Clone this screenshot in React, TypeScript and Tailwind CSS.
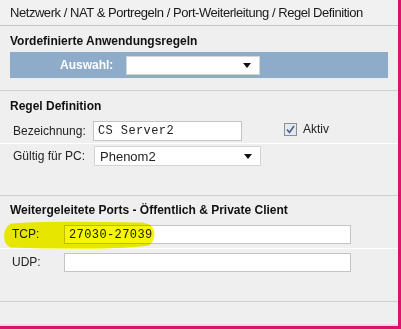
import React from "react";

const sans = "font-['Liberation_Sans',Arial,sans-serif]";
const mono = "font-['Liberation_Mono','Courier_New',monospace]";

function Caret() {
    return (
        <svg width="8" height="5" viewBox="0 0 8 5" className="shrink-0">
            <path d="M0 0H8L4 5Z" fill="#111" />
        </svg>
    );
}

function SelectBox({ value, className }: { value?: string; className: string }) {
    return (
        <div className={`flex items-center justify-between bg-white border border-[#d4d4d4] pl-[5px] pr-[8px] ${className}`}>
            <span className="text-[13px] leading-none text-[#222]">{value}</span>
            <Caret />
        </div>
    );
}

function TextBox({ value, className }: { value?: string; className: string }) {
    return (
        <div className={`flex items-center bg-white border border-[#c4c4c4] pl-[4px] ${className}`}>
            <span className={`${mono} text-[12px] leading-none text-[#222] tracking-[0.4px]`}>{value}</span>
        </div>
    );
}

function Highlight() {
    return (
        <svg
            width="170"
            height="34"
            viewBox="0 0 170 34"
            className="absolute left-0 top-[217px] mix-blend-multiply pointer-events-none"
        >
            <path
                d="M12 9 C40 6 90 7 142 8 L149 10 C153 14 153 22 148 26 C120 30 60 30 11 28 C5 25 5 13 12 9 Z"
                fill="#f6f600"
                stroke="#f6f600"
                strokeWidth="5"
                strokeLinejoin="round"
            />
        </svg>
    );
}

export default function App() {
    return (
        <div className={`relative w-[401px] h-[329px] bg-[#d8136f] ${sans}`}>
            <div className="relative w-[398px] h-[326px] bg-[#efefef] text-[#222] text-[12px] overflow-hidden">
                {/* Breadcrumb */}
                <div className="h-[26px] bg-[#f1f1f1] border-b border-[#c6c6c6] pl-[10px] flex items-center text-[13px] tracking-[-0.45px] text-[#1a1a1a]">
                    Netzwerk / NAT &amp; Portregeln / Port-Weiterleitung / Regel Definition
                </div>

                {/* Vordefinierte Anwendungsregeln */}
                <div className="px-[10px] pt-[8px] h-[65px] border-b border-[#cfcfcf]">
                    <div className="font-bold text-[12px] leading-[14px] text-[#111]">Vordefinierte Anwendungsregeln</div>
                    <div className="mt-[4px] h-[26px] bg-[#8eabc9] flex items-center pl-[50px]">
                        <span className="text-white font-bold text-[12px] w-[66px]">Auswahl:</span>
                        <SelectBox className="w-[134px] h-[19px]" />
                    </div>
                </div>

                {/* Regel Definition */}
                <div className="pt-[8px] h-[105px] border-b border-[#cfcfcf]">
                    <div className="pl-[10px] font-bold text-[12px] leading-[14px] text-[#111]">Regel Definition</div>
                    <div className="mt-[8px] h-[23px] flex items-start border-b border-white">
                        <span className="pl-[13px] w-[93px] text-[12px] leading-[20px]">Bezeichnung:</span>
                        <TextBox value="CS Server2" className="w-[149px] h-[20px]" />
                        <div className="ml-[42px] mt-[2px] w-[13px] h-[13px] border border-[#8f8f8f] bg-[#e3e9f2] flex items-center justify-center">
                            <svg width="9" height="9" viewBox="0 0 9 9">
                                <path d="M1 4.5 L3.5 7.5 L8 1" fill="none" stroke="#4a5f8a" strokeWidth="1.6" />
                            </svg>
                        </div>
                        <span className="ml-[6px] text-[12px] leading-[17px]">Aktiv</span>
                    </div>
                    <div className="mt-[2px] flex items-center">
                        <span className="pl-[13px] w-[94px] text-[12px]">Gültig für PC:</span>
                        <SelectBox value="Phenom2" className="w-[167px] h-[20px]" />
                    </div>
                </div>

                {/* Weitergeleitete Ports */}
                <div className="pt-[7px] h-[106px] border-b border-[#cfcfcf]">
                    <div className="pl-[10px] font-bold text-[12px] leading-[14px] text-[#111]">
                        Weitergeleitete Ports - Öffentlich &amp; Private Client
                    </div>
                    <div className="mt-[8px] h-[24px] flex items-start border-b border-white">
                        <span className="pl-[12px] w-[64px] text-[12px] leading-[19px]">TCP:</span>
                        <TextBox value="27030-27039" className="w-[287px] h-[19px]" />
                    </div>
                    <div className="mt-[4px] flex items-start">
                        <span className="pl-[12px] w-[64px] text-[12px] leading-[19px]">UDP:</span>
                        <TextBox className="w-[287px] h-[19px]" />
                    </div>
                </div>

                <Highlight />
                <div className="absolute left-0 right-0 bottom-0 h-[2px] bg-[#fbd4e6]" />
            </div>
        </div>
    );
}
